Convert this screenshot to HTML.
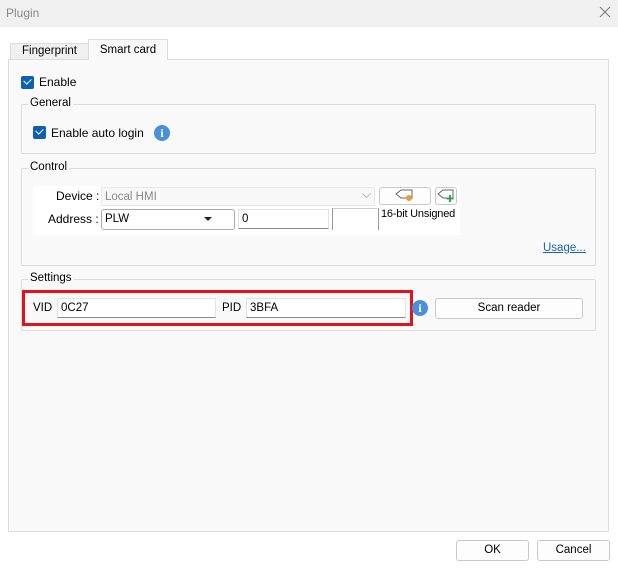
<!DOCTYPE html>
<html><head><style>
*{box-sizing:border-box}
body{margin:0;width:618px;height:570px;background:#fff;font-family:"Liberation Sans",sans-serif;font-size:12px;color:#000;position:relative;overflow:hidden}
.a{position:absolute}
.title{left:0;top:0;width:618px;height:27px;background:#f0f0f0}
.panel{left:8px;top:59px;width:601px;height:473px;background:#f9f9f9;border:1px solid #dcdcdc}
.tab{border:1px solid #dcdcdc;border-bottom:none;text-align:center;font-size:11.5px}
.grp{border:1px solid #dcdcdc;border-radius:2px}
.lbl{background:#f9f9f9;padding:0 2px;font-size:11.5px}
.cb{width:13px;height:13px;background:#0f5fb5;border-radius:2px}
.cb:after{content:"";position:absolute;left:3px;top:2px;width:6px;height:4px;border-left:1.5px solid #fff;border-bottom:1.5px solid #fff;transform:rotate(-45deg)}
.info{width:16px;height:16px;border-radius:50%;background:#4a8fd9;color:#fff;font-weight:bold;font-size:12px;text-align:center;line-height:16px;font-family:"Liberation Serif",serif}
.inp{background:#fff;border:1px solid #e3e3e3;border-bottom:1px solid #8a8a8a;font-size:11.5px;padding:2px 3px;line-height:14px}
.btn{background:#fdfdfd;border:1px solid #c8c8c8;border-radius:3px;text-align:center;font-size:11.5px}
</style></head><body>
<div class="a title"></div>
<div class="a" style="left:6px;top:6px;color:#8a8a8a;font-size:12px">Plugin</div>
<svg class="a" style="left:599px;top:6px" width="12" height="12"><path d="M1 1L11 11M11 1L1 11" stroke="#777" stroke-width="1"/></svg>

<div class="a tab" style="left:10px;top:43px;width:79px;height:17px;background:#f0f0f0;line-height:15px">Fingerprint</div>
<div class="a panel"></div>
<div class="a tab" style="left:88px;top:39px;width:80px;height:21px;background:#f9f9f9;line-height:20px">Smart card</div>

<div class="a cb" style="left:21px;top:76px"></div>
<div class="a" style="left:39px;top:75px">Enable</div>

<div class="a grp" style="left:21px;top:104px;width:575px;height:50px"></div>
<div class="a lbl" style="left:28px;top:97px">General</div>
<div class="a cb" style="left:33px;top:126px"></div>
<div class="a" style="left:51px;top:126px">Enable auto login</div>
<div class="a info" style="left:154px;top:125px">i</div>

<div class="a grp" style="left:21px;top:168px;width:575px;height:98px"></div>
<div class="a lbl" style="left:28px;top:161px">Control</div>
<div class="a" style="left:33px;top:186px;width:427px;height:49px;background:#fff"></div>
<div class="a" style="left:56px;top:189px">Device :</div>
<div class="a" style="left:48px;top:212px">Address :</div>
<div class="a inp" style="left:101px;top:187px;width:274px;height:19px;border-color:#e8e8e8;color:#888;background:#f8f8f8">Local HMI</div>
<svg class="a" style="left:362px;top:193px" width="9" height="6"><path d="M0.5 0.5L4.5 4.5L8.5 0.5" stroke="#bbb" fill="none"/></svg>
<div class="a btn" style="left:379px;top:187px;width:52px;height:18px"></div>
<svg class="a" style="left:395px;top:189px" width="20" height="14"><path d="M6 1H17V9H6L1 5Z" stroke="#666" fill="#fff"/><circle cx="14" cy="9" r="3" fill="#e0a040"/></svg>
<div class="a btn" style="left:435px;top:187px;width:22px;height:18px"></div>
<svg class="a" style="left:437px;top:189px" width="19" height="14"><path d="M6 1H16V9H6L1 5Z" stroke="#666" fill="#fff"/><path d="M13 6V13M9.5 9.5H16.5" stroke="#3aa050" stroke-width="2"/></svg>
<div class="a inp" style="left:101px;top:209px;width:134px;height:21px;border:1px solid #aaa;border-radius:3px">PLW</div>
<svg class="a" style="left:204px;top:217px" width="9" height="5"><path d="M0 0H8L4 4Z" fill="#222"/></svg>
<div class="a inp" style="left:238px;top:209px;width:91px;height:20px">0</div>
<div class="a" style="left:332px;top:208px;width:45px;height:22px;background:#fff;border-left:1px solid #999;border-top:1px solid #ccc"></div>
<div class="a" style="left:378px;top:208px;width:82px;height:22px;border-left:1px solid #999;padding-left:2px;font-size:11px;white-space:nowrap;letter-spacing:-0.2px">16-bit Unsigned</div>
<div class="a" style="left:543px;top:242px;color:#1a5fb4;text-decoration:underline;font-size:11.5px">Usage...</div>

<div class="a grp" style="left:21px;top:279px;width:575px;height:52px"></div>
<div class="a lbl" style="left:28px;top:272px">Settings</div>
<div class="a" style="left:22px;top:290px;width:391px;height:36px;border:3px solid #e1141e"></div>
<div class="a" style="left:33px;top:302px;font-size:11.5px">VID</div>
<div class="a inp" style="left:57px;top:298px;width:159px;height:20px">0C27</div>
<div class="a" style="left:222px;top:302px;font-size:11.5px">PID</div>
<div class="a inp" style="left:246px;top:298px;width:160px;height:20px">3BFA</div>
<div class="a info" style="left:412px;top:300px">i</div>
<div class="a btn" style="left:435px;top:298px;width:148px;height:21px;line-height:19px">Scan reader</div>

<div class="a btn" style="left:456px;top:540px;width:73px;height:21px;line-height:19px">OK</div>
<div class="a btn" style="left:537px;top:540px;width:73px;height:21px;line-height:19px">Cancel</div>
</body></html>
